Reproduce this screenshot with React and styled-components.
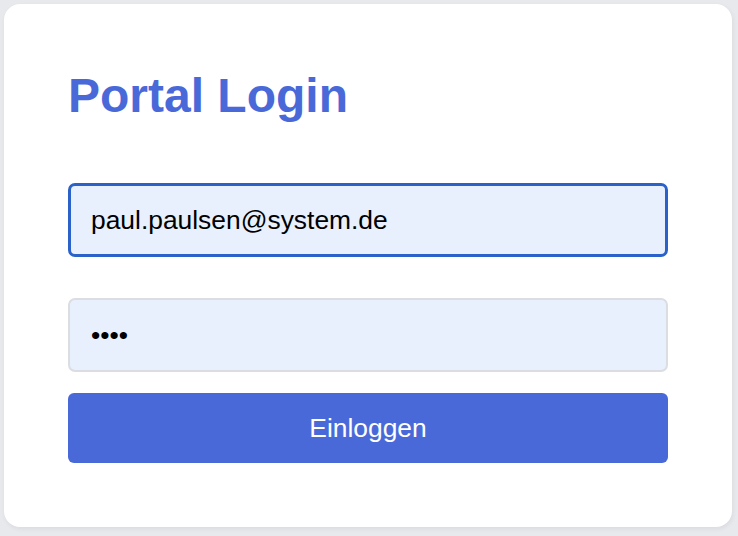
import React from "react"
import styled, { createGlobalStyle } from "styled-components"

const GlobalStyle = createGlobalStyle`
  html, body {
    margin: 0;
    background: #e8e9ed;
    font-family: "Liberation Sans", Arial, Helvetica, sans-serif;
  }
`

export default function App() {
  return (
    <>
      <GlobalStyle />
      <Page>
        <Card>
          <Title>Portal Login</Title>
          <Form onSubmit={e => e.preventDefault()}>
            <Field
              type="email"
              defaultValue="paul.paulsen@system.de"
              $focused
              $gap={41}
            />
            <Field type="password" defaultValue="abcd" $gap={21} />
            <SubmitButton type="submit">Einloggen</SubmitButton>
          </Form>
        </Card>
      </Page>
    </>
  )
}

const Page = styled.div`
  padding: 4px 6px 9px 4px;
  box-sizing: border-box;
  min-height: 536px;
`

const Card = styled.div`
  background: #ffffff;
  border-radius: 16px;
  padding: 64px;
  display: flex;
  flex-direction: column;
  box-shadow: 1px 2px 4px rgba(60, 64, 80, 0.08);
`

const Title = styled.h1`
  margin: 0 0 60px;
  font-size: 48px;
  font-weight: 700;
  line-height: normal;
  color: #4a69d9;
`

const Form = styled.form`
  display: flex;
  flex-direction: column;
`

const Field = styled.input`
  box-sizing: border-box;
  height: 74px;
  width: 100%;
  margin: 0 0 ${p => p.$gap}px;
  padding: 0 ${p => (p.$focused ? 20 : 21)}px;
  border: ${p => (p.$focused ? "3px solid #2a62c9" : "2px solid #dcdde2")};
  border-radius: 7px;
  background: #e8effd;
  font-family: "Liberation Sans", Arial, sans-serif;
  font-size: 26.4px;
  color: #000;
  outline: none;
`

const SubmitButton = styled.button`
  height: 70px;
  border: none;
  border-radius: 6px;
  background: #4a69d9;
  color: #ffffff;
  font-family: "Liberation Sans", Arial, sans-serif;
  font-size: 26.4px;
  cursor: pointer;
`
